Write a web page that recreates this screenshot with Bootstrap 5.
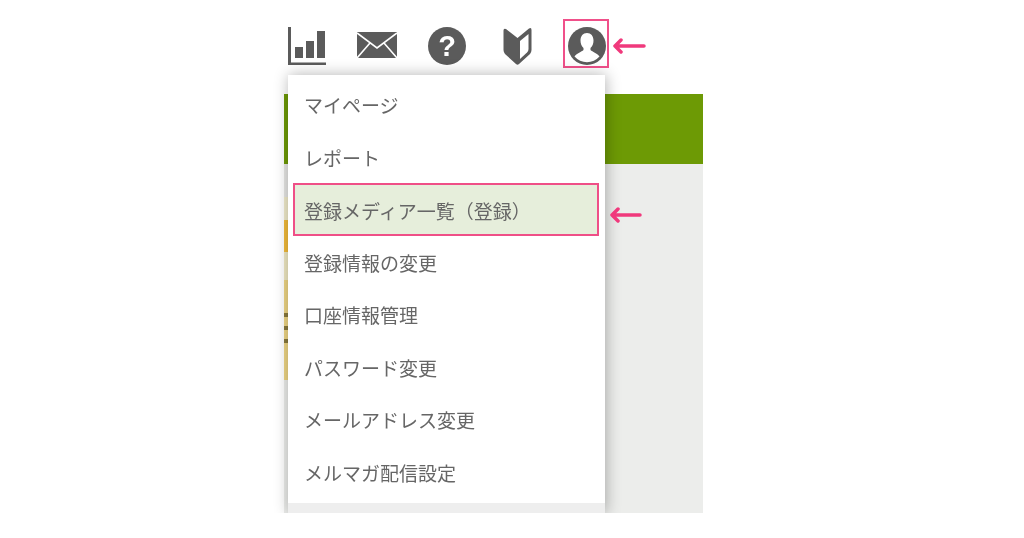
<!DOCTYPE html>
<html lang="ja">
<head>
  <meta charset="UTF-8">
  <meta name="viewport" content="width=device-width, initial-scale=1.0">
  <title>メニュー</title>
  <link rel="stylesheet" href="https://cdn.jsdelivr.net/npm/bootstrap@5.3.0/dist/css/bootstrap.min.css">
  <style>
    body { background: #fff; overflow: hidden; font-family: "Liberation Sans", "Noto Sans CJK JP", sans-serif; }
    .page-wrap { width: 1024px; height: 538px; filter: blur(.45px); }
    .icon-bar { height: 94px; padding: 27px 0 0 272px; }
    .icon-slot { width: 70px; height: 38px; }
    .icon-slot svg { fill: #5b5b5b; display: block; }
    .user-slot { position: relative; }
    .user-mark { position: absolute; left: 11px; top: -8px; width: 46px; height: 49px; border: 2px solid #f0508a; }
    .note-arrow { position: absolute; stroke: #f0397c; stroke-width: 3.5; fill: none; stroke-linecap: round; stroke-linejoin: round; }
    .arrow-top { left: 612px; top: 38px; }
    .arrow-row { left: 609px; top: 207px; }
    .back-panel { width: 419px; height: 419px; margin-left: 284px; }
    .back-green { height: 70px; background: #6d9a05; }
    .back-gray { background: #ecedeb; }
    .hero-edge { width: 4px; }
    .edge-a { height: 33px; background: #e6e6e4; }
    .edge-b { height: 23px; background: #f0ebcb; }
    .edge-c { height: 32px; background: #f2bb3a; }
    .edge-d { height: 28px; background: #efe8c2; }
    .edge-e { height: 33px; background: #eed584; }
    .edge-f { height: 9px; background: #eed584; }
    .edge-h { height: 28px; background: #eed584; }
    .edge-s { height: 4px; background: #8a7a3c; }
    .drop-menu { position: absolute; left: 288px; top: 75px; width: 317px; height: 438px; background: #fff; box-shadow: 1px 0 14px rgba(0,0,0,.3); clip-path: inset(-20px -20px 0 -20px); padding-top: 6px; }
    .drop-menu .list-group-item { height: 52.5px; padding: 0 0 0 16px; border: 0; background: transparent; color: #666; font-size: 19px; display: flex; align-items: center; }
    .drop-menu .item-current { height: 53px; margin: -3px 6px 2.5px 5px; padding: 8px 0 0 9px; background: #e6eedb; border: 2px solid #ef4f87; }
    .menu-foot { position: absolute; left: 0; right: 0; bottom: 0; height: 10px; background: #eee; }
  </style>
</head>
<body>
  <div class="page-wrap position-relative">
    <div class="icon-bar d-flex">
      <div class="icon-slot d-flex justify-content-center">
        <svg width="38" height="38" viewBox="0 0 38 38"><path d="M0 0h3v35.500h35v2.500H0z"/><rect x="7" y="20" width="8" height="11"/><rect x="18" y="14" width="8" height="17"/><rect x="29" y="4" width="8" height="27"/></svg>
      </div>
      <div class="icon-slot d-flex justify-content-center">
        <svg class="mt-1" width="40" height="28" viewBox="0 0 40 28"><rect y="1" width="40" height="26"/><path d="M0 2l20 15L40 2M0 27l13-15M40 27L27 12" stroke="#fff" stroke-width="1.600" fill="none"/></svg>
      </div>
      <div class="icon-slot d-flex justify-content-center">
        <svg width="38" height="38" viewBox="0 0 38 38"><circle cx="19" cy="19" r="19"/><text x="19" y="29" text-anchor="middle" font-family="Liberation Sans" font-weight="700" font-size="29" fill="#fff">?</text></svg>
      </div>
      <div class="icon-slot d-flex justify-content-center">
        <svg width="29" height="38" viewBox="0 0 29 38"><path d="M.5 3.500Q.5 1 3 2L14.500 11 26 1.500Q28.500 0 28.500 3V23Q28.500 25 27 27L16 37Q14.500 38.500 13 37L2 27Q.5 25 .5 23z"/><path d="M17 14l8.500-7v15q0 2-1.500 3.500L17 32z" fill="#fff"/></svg>
      </div>
      <div class="icon-slot user-slot d-flex justify-content-center">
        <svg width="38" height="38" viewBox="0 0 38 38"><circle cx="19" cy="19" r="19"/><path d="M19 6c-4 0-6.500 3-6.500 7.500 0 3 1 5.500 3 7.500v2c-2 2-6.500 3-9 6.500A16.700 16.700 0 0 0 31.500 29.500c-2.500-3.500-7-4.500-9-6.500v-2c2-2 3-4.500 3-7.500C25.500 9 23 6 19 6z" fill="#fff"/></svg>
        <span class="user-mark"></span>
      </div>
    </div>

    <div class="back-panel d-flex flex-column">
      <div class="back-green"></div>
      <div class="back-gray flex-grow-1">
        <div class="hero-edge d-flex flex-column">
          <div class="edge-a"></div>
          <div class="edge-b"></div>
          <div class="edge-c"></div>
          <div class="edge-d"></div>
          <div class="edge-e"></div>
          <div class="edge-s"></div>
          <div class="edge-f"></div>
          <div class="edge-s"></div>
          <div class="edge-f"></div>
          <div class="edge-s"></div>
          <div class="edge-f"></div>
          <div class="edge-h"></div>
        </div>
      </div>
    </div>

    <div class="drop-menu">
      <div class="list-group list-group-flush">
        <div class="list-group-item">マイページ</div>
        <div class="list-group-item">レポート</div>
        <div class="list-group-item item-current">登録メディア一覧（登録）</div>
        <div class="list-group-item">登録情報の変更</div>
        <div class="list-group-item">口座情報管理</div>
        <div class="list-group-item">パスワード変更</div>
        <div class="list-group-item">メールアドレス変更</div>
        <div class="list-group-item">メルマガ配信設定</div>
      </div>
      <div class="menu-foot"></div>
    </div>

    <svg class="note-arrow arrow-top" width="34" height="16" viewBox="0 0 34 16"><path d="M3 8h29M9 2L3 8l6 6"/></svg>
    <svg class="note-arrow arrow-row" width="34" height="16" viewBox="0 0 34 16"><path d="M3 8h28M9 2L3 8l6 6"/></svg>
  </div>
  <script src="https://cdn.jsdelivr.net/npm/bootstrap@5.3.0/dist/js/bootstrap.bundle.min.js"></script>
</body>
</html>
